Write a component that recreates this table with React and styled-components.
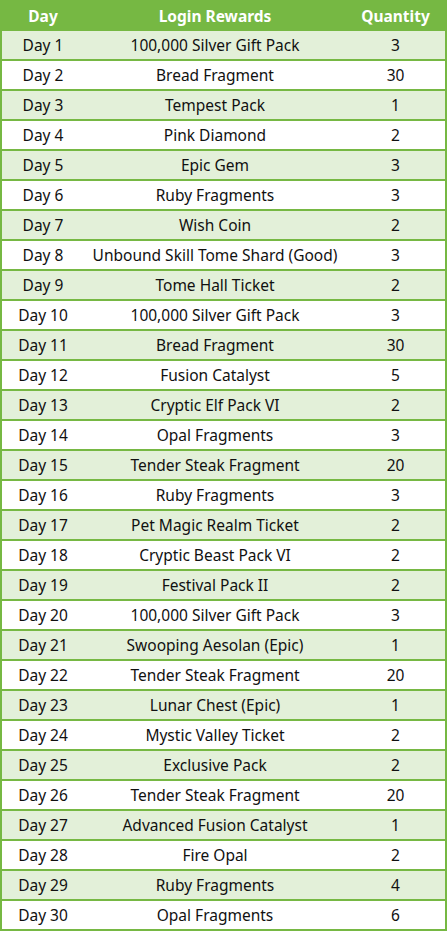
import React from 'react';
import styled, { createGlobalStyle } from 'styled-components';

const GlobalStyle = createGlobalStyle`
  html, body {
    margin: 0;
    padding: 0;
    background: #ffffff;
  }
  body {
    font-family: "Noto Sans", "Open Sans", "Liberation Sans", sans-serif;
  }
`;

const GREEN = '#76b843';
const LIGHT = '#e3f0d9';

const rewards = [
  ['100,000 Silver Gift Pack', 3],
  ['Bread Fragment', 30],
  ['Tempest Pack', 1],
  ['Pink Diamond', 2],
  ['Epic Gem', 3],
  ['Ruby Fragments', 3],
  ['Wish Coin', 2],
  ['Unbound Skill Tome Shard (Good)', 3],
  ['Tome Hall Ticket', 2],
  ['100,000 Silver Gift Pack', 3],
  ['Bread Fragment', 30],
  ['Fusion Catalyst', 5],
  ['Cryptic Elf Pack VI', 2],
  ['Opal Fragments', 3],
  ['Tender Steak Fragment', 20],
  ['Ruby Fragments', 3],
  ['Pet Magic Realm Ticket', 2],
  ['Cryptic Beast Pack VI', 2],
  ['Festival Pack II', 2],
  ['100,000 Silver Gift Pack', 3],
  ['Swooping Aesolan (Epic)', 1],
  ['Tender Steak Fragment', 20],
  ['Lunar Chest (Epic)', 1],
  ['Mystic Valley Ticket', 2],
  ['Exclusive Pack', 2],
  ['Tender Steak Fragment', 20],
  ['Advanced Fusion Catalyst', 1],
  ['Fire Opal', 2],
  ['Ruby Fragments', 4],
  ['Opal Fragments', 6],
];

const Table = styled.div`
  width: 447px;
  box-sizing: border-box;
  border-left: 2px solid ${GREEN};
  border-right: 2px solid ${GREEN};
  border-bottom: 2px solid ${GREEN};
`;

const Row = styled.div`
  display: grid;
  grid-template-columns: 82px 262px 99px;
  height: ${({ $head }) => ($head ? '31px' : '28px')};
  background: ${({ $head, $shade }) => ($head ? GREEN : $shade ? LIGHT : '#ffffff')};

  & + & + & {
    border-top: 2px solid ${GREEN};
  }
`;

const Cell = styled.div`
  display: flex;
  align-items: center;
  justify-content: center;
  white-space: nowrap;
  font-size: 15.5px;
  font-weight: ${({ $head }) => ($head ? 700 : 400)};
  color: ${({ $head }) => ($head ? '#ffffff' : '#111111')};
`;

export default function App() {
  return (
    <>
      <GlobalStyle />
      <Table>
        <Row $head>
          <Cell $head>Day</Cell>
          <Cell $head>Login Rewards</Cell>
          <Cell $head>Quantity</Cell>
        </Row>
        {rewards.map(([name, qty], i) => (
          <Row key={i} $shade={i % 2 === 0}>
            <Cell>Day {i + 1}</Cell>
            <Cell>{name}</Cell>
            <Cell>{qty}</Cell>
          </Row>
        ))}
      </Table>
    </>
  );
}
